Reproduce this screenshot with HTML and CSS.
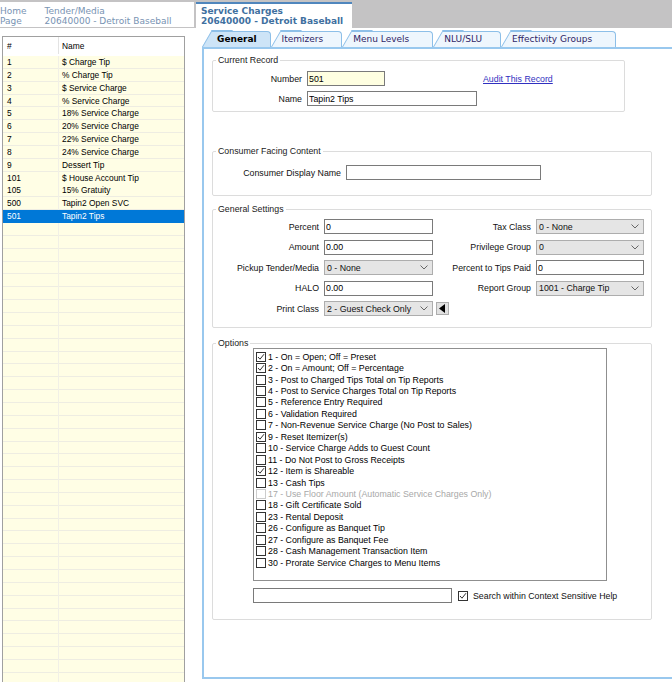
FILE: index.html
```html
<!DOCTYPE html>
<html lang="en">

  <head>
    <meta charset="UTF-8">
    <meta name="viewport" content="width=device-width, initial-scale=1.0">
    <title>Service Charges</title>

    <link rel="stylesheet" href="styles.css">

  </head>

  <body>

    <header class="crumbs">
      <div class="crumbs__trail">
        <span class="crumb">Home<br>Page</span>
        <span class="crumb">Tender/Media<br>20640000 - Detroit Baseball</span>
      </div>
      <div class="crumb crumb--active">Service Charges<br>20640000 - Detroit Baseball</div>
    </header>

    <div id="app__body">

      <div class="list">
        <div class="list__head">
          <span class="col__num">#</span>
          <span class="col__name">Name</span>
        </div>
        <div class="list__rows">
          <div class="row"><span class="col__num">1</span><span class="col__name">$ Charge Tip</span></div>
          <div class="row"><span class="col__num">2</span><span class="col__name">% Charge Tip</span></div>
          <div class="row"><span class="col__num">3</span><span class="col__name">$ Service Charge</span></div>
          <div class="row"><span class="col__num">4</span><span class="col__name">% Service Charge</span></div>
          <div class="row"><span class="col__num">5</span><span class="col__name">18% Service Charge</span></div>
          <div class="row"><span class="col__num">6</span><span class="col__name">20% Service Charge</span></div>
          <div class="row"><span class="col__num">7</span><span class="col__name">22% Service Charge</span></div>
          <div class="row"><span class="col__num">8</span><span class="col__name">24% Service Charge</span></div>
          <div class="row"><span class="col__num">9</span><span class="col__name">Dessert Tip</span></div>
          <div class="row"><span class="col__num">101</span><span class="col__name">$ House Account Tip</span></div>
          <div class="row"><span class="col__num">105</span><span class="col__name">15% Gratuity</span></div>
          <div class="row"><span class="col__num">500</span><span class="col__name">Tapin2 Open SVC</span></div>
          <div class="row row--selected"><span class="col__num">501</span><span class="col__name">Tapin2 Tips</span></div>
        </div>
      </div>

      <div class="editor">
        <nav class="tabs">
          <span class="tab tab--active">General</span>
          <span class="tab">Itemizers</span>
          <span class="tab tab--wide">Menu Levels</span>
          <span class="tab">NLU/SLU</span>
          <span class="tab tab--wide">Effectivity Groups</span>
        </nav>

        <div class="panel">

          <fieldset class="group group--narrow">
            <legend>Current Record</legend>
            <div class="field">
              <label class="field__label record__label">Number</label>
              <input class="input input--key record__number" type="text" value="501">
              <a href="#" class="audit">Audit This Record</a>
            </div>
            <div class="field field--next">
              <label class="field__label record__label">Name</label>
              <input class="input record__name" type="text" value="Tapin2 Tips">
            </div>
          </fieldset>

          <fieldset class="group group--consumer">
            <legend>Consumer Facing Content</legend>
            <div class="field consumer__field">
              <label class="field__label consumer__label">Consumer Display Name</label>
              <input class="input consumer__input" type="text" value="">
            </div>
          </fieldset>

          <fieldset class="group group--settings">
            <legend>General Settings</legend>
            <div class="settings">
              <label class="field__label">Percent</label>
              <input class="input" type="text" value="0">
              <label class="field__label">Tax Class</label>
              <div class="select"><span>0 - None</span><svg width="8" height="5" viewBox="0 0 8 5"><path d="M0.5 0.5 L4 4 L7.5 0.5" fill="none" stroke="#666" stroke-width="1"/></svg></div>

              <label class="field__label">Amount</label>
              <input class="input" type="text" value="0.00">
              <label class="field__label">Privilege Group</label>
              <div class="select"><span>0</span><svg width="8" height="5" viewBox="0 0 8 5"><path d="M0.5 0.5 L4 4 L7.5 0.5" fill="none" stroke="#666" stroke-width="1"/></svg></div>

              <label class="field__label">Pickup Tender/Media</label>
              <div class="select"><span>0 - None</span><svg width="8" height="5" viewBox="0 0 8 5"><path d="M0.5 0.5 L4 4 L7.5 0.5" fill="none" stroke="#666" stroke-width="1"/></svg></div>
              <label class="field__label">Percent to Tips Paid</label>
              <input class="input" type="text" value="0">

              <label class="field__label">HALO</label>
              <input class="input" type="text" value="0.00">
              <label class="field__label">Report Group</label>
              <div class="select"><span>1001 - Charge Tip</span><svg width="8" height="5" viewBox="0 0 8 5"><path d="M0.5 0.5 L4 4 L7.5 0.5" fill="none" stroke="#666" stroke-width="1"/></svg></div>

              <label class="field__label">Print Class</label>
              <div class="select"><span>2 - Guest Check Only</span><svg width="8" height="5" viewBox="0 0 8 5"><path d="M0.5 0.5 L4 4 L7.5 0.5" fill="none" stroke="#666" stroke-width="1"/></svg></div>
              <button class="arrow__btn" type="button"><svg width="7" height="9" viewBox="0 0 7 9"><polygon points="6,0 6,9 0,4.5" fill="#000"/></svg></button>
              <span></span>
            </div>
          </fieldset>

          <fieldset class="group group--options">
            <legend>Options</legend>
            <div class="options__list">
              <div class="option"><span class="check check--on"><svg width="8" height="8" viewBox="0 0 8 8"><path d="M1 4 L3 6.2 L7 1.2" fill="none" stroke="#333" stroke-width="1"/></svg></span>1 - On = Open; Off = Preset</div>
              <div class="option"><span class="check check--on"><svg width="8" height="8" viewBox="0 0 8 8"><path d="M1 4 L3 6.2 L7 1.2" fill="none" stroke="#333" stroke-width="1"/></svg></span>2 - On = Amount; Off = Percentage</div>
              <div class="option"><span class="check"></span>3 - Post to Charged Tips Total on Tip Reports</div>
              <div class="option"><span class="check"></span>4 - Post to Service Charges Total on Tip Reports</div>
              <div class="option"><span class="check"></span>5 - Reference Entry Required</div>
              <div class="option"><span class="check"></span>6 - Validation Required</div>
              <div class="option"><span class="check"></span>7 - Non-Revenue Service Charge (No Post to Sales)</div>
              <div class="option"><span class="check check--on"><svg width="8" height="8" viewBox="0 0 8 8"><path d="M1 4 L3 6.2 L7 1.2" fill="none" stroke="#333" stroke-width="1"/></svg></span>9 - Reset Itemizer(s)</div>
              <div class="option"><span class="check"></span>10 - Service Charge Adds to Guest Count</div>
              <div class="option"><span class="check"></span>11 - Do Not Post to Gross Receipts</div>
              <div class="option"><span class="check check--on"><svg width="8" height="8" viewBox="0 0 8 8"><path d="M1 4 L3 6.2 L7 1.2" fill="none" stroke="#333" stroke-width="1"/></svg></span>12 - Item is Shareable</div>
              <div class="option"><span class="check"></span>13 - Cash Tips</div>
              <div class="option option--disabled"><span class="check"></span>17 - Use Floor Amount (Automatic Service Charges Only)</div>
              <div class="option"><span class="check"></span>18 - Gift Certificate Sold</div>
              <div class="option"><span class="check"></span>23 - Rental Deposit</div>
              <div class="option"><span class="check"></span>26 - Configure as Banquet Tip</div>
              <div class="option"><span class="check"></span>27 - Configure as Banquet Fee</div>
              <div class="option"><span class="check"></span>28 - Cash Management Transaction Item</div>
              <div class="option"><span class="check"></span>30 - Prorate Service Charges to Menu Items</div>
            </div>
            <div class="help">
              <input class="input help__input" type="text" value="">
              <span class="check check--on"><svg width="8" height="8" viewBox="0 0 8 8"><path d="M1 4 L3 6.2 L7 1.2" fill="none" stroke="#333" stroke-width="1"/></svg></span>
              <span class="help__text">Search within Context Sensitive Help</span>
            </div>
          </fieldset>

        </div>
      </div>

    </div>

  </body>

</html>
```

FILE: styles.css
```css
* {
  margin: 0;
  padding: 0;
  box-sizing: border-box;
}

body {
  width: 672px;
  height: 682px;
  overflow: hidden;
  background-color: #ffffff;
  font-family: "Liberation Sans", Arial, sans-serif;
  color: #111;
}

/* breadcrumb strip */
.crumbs {
  display: flex;
  align-items: flex-start;
  height: 28px;
  padding-top: 2px;
  background-color: #c4c3c4;
  font: 9px/10px "DejaVu Sans", Verdana, sans-serif;
}

.crumbs__trail {
  display: flex;
  gap: 18px;
  width: 194px;
  height: 25px;
  padding-top: 4px;
  background-color: #ffffff;
}

.crumb {
  color: #7893b3;
  white-space: nowrap;
}

.crumb--active {
  width: 156px;
  height: 26px;
  margin-left: 2px;
  padding: 2px 0 0 5px;
  border-top: 2px solid #4f86bd;
  background-color: #ffffff;
  color: #40709f;
  font-weight: bold;
}

#app__body {
  display: flex;
  align-items: flex-start;
}

/* left list */
.list {
  width: 183px;
  height: 646px;
  margin: 8px 0 0 2px;
  border: 1px solid #a0a0a0;
  border-bottom: none;
  font-size: 8.4px;
  color: #000;
}

.list__head {
  display: flex;
  height: 19px;
  align-items: center;
  border-bottom: 1px solid #ffffff;
  padding-bottom: 1px;
}

.list__head .col__num {
  height: 100%;
  display: flex;
  align-items: center;
  border-right: 1px solid #e3e3e3;
}

.col__num {
  width: 56px;
  padding-left: 4px;
}

.col__name {
  padding-left: 3px;
}

.list__rows {
  height: 627px;
  background:
    linear-gradient(to right, transparent 55px, #f1f0e6 55px, #f1f0e6 56px, transparent 56px),
    repeating-linear-gradient(to bottom, #fffee5 0, #fffee5 11.85px, #eeede2 11.85px, #eeede2 12.85px);
}

.row {
  display: flex;
  height: 12.85px;
  line-height: 12.85px;
}

.row--selected {
  background-color: #0078d7;
  color: #ffffff;
}

/* editor with tabs */
.editor {
  flex: 1;
  margin: 3px 0 0 17px;
}

.tabs {
  display: flex;
  height: 16px;
}

.tab {
  position: relative;
  z-index: 0;
  padding: 0 19px 0 11px;
  font: 9px/16px "DejaVu Sans", Verdana, sans-serif;
  color: #2f2566;
  white-space: nowrap;
}

.tab::before {
  content: "";
  position: absolute;
  left: 0;
  bottom: 0;
  width: 20px;
  height: 100%;
  z-index: -1;
  background-color: #eef6fd;
  border-left: 1px solid #8dbfe8;
  border-top: 1px solid #8dbfe8;
  transform: skewX(-30deg);
  transform-origin: bottom left;
}

.tab::after {
  content: "";
  position: absolute;
  top: 0;
  bottom: 0;
  left: 10px;
  right: 0;
  z-index: -1;
  background-color: #eef6fd;
  border-top: 1px solid #8dbfe8;
  border-right: 1px solid #8dbfe8;
  border-radius: 0 4px 0 0;
}

.tab--wide {
  padding-right: 24px;
}

.tab--active {
  padding: 0 14px 0 15px;
  font-weight: bold;
  color: #000;
}

.tab--active::before,
.tab--active::after {
  background-color: #cde4f7;
}

.panel {
  height: 632px;
  padding: 6px 0 0 8px;
  border: 2px solid #99c8ee;
  border-right: none;
}

/* group boxes */
.group {
  width: 440px;
  border: 1px solid #dcdcdc;
  border-radius: 2px;
  min-width: 0;
}

.group legend {
  margin-left: 3px;
  padding: 0 2px;
  font-size: 8.8px;
  line-height: 10px;
  color: #1a1a1a;
}

.group--narrow {
  width: 413px;
  padding-bottom: 5px;
}

.group--consumer {
  margin-top: 34px;
  padding-bottom: 15px;
}

.group--settings {
  margin-top: 8px;
  padding-bottom: 11px;
}

.group--options {
  margin-top: 10px;
  padding-bottom: 16px;
}

.field {
  display: flex;
  align-items: center;
  gap: 5px;
  margin-top: 6px;
}

.field--next {
  margin-top: 5px;
}

.field__label {
  font-size: 8.8px;
  text-align: right;
  white-space: nowrap;
}

.record__label {
  width: 89px;
}

.input {
  height: 15px;
  padding: 0 1px;
  border: 1px solid #7a7a7a;
  background-color: #ffffff;
  font: 8.8px "Liberation Sans", Arial, sans-serif;
  color: #000;
  outline: none;
}

.input--key {
  background-color: #ffffe1;
}

.record__number {
  width: 78px;
}

.record__name {
  width: 170px;
}

.audit {
  margin-left: 93px;
  margin-top: 1px;
  font-size: 8.8px;
  color: #3030c0;
}

.consumer__field {
  margin-top: 9px;
}

.consumer__label {
  width: 128px;
}

.consumer__input {
  width: 195px;
}

.settings {
  display: grid;
  grid-template-columns: 106px 109px 93px 108px;
  grid-auto-rows: 15px;
  column-gap: 5px;
  row-gap: 5.5px;
  align-items: center;
  margin-top: 5px;
}

.select {
  display: flex;
  align-items: center;
  justify-content: space-between;
  height: 15px;
  padding: 0 4px 0 2px;
  border: 1px solid #adadad;
  background-color: #e5e5e5;
  font-size: 8.8px;
  white-space: nowrap;
}

.arrow__btn {
  display: flex;
  align-items: center;
  justify-content: center;
  width: 13px;
  height: 13px;
  margin-left: -2px;
  border: 1px solid #adadad;
  background-color: #e1e1e1;
}

/* options list */
.options__list {
  width: 354px;
  height: 233px;
  margin-left: 40px;
  padding: 2px 0 0 2px;
  border: 1px solid #8f8f8f;
  font-size: 8.8px;
  color: #000;
}

.option {
  display: flex;
  align-items: center;
  gap: 2px;
  height: 11.45px;
  white-space: nowrap;
}

.check {
  display: flex;
  align-items: center;
  justify-content: center;
  width: 10px;
  height: 10px;
  border: 1px solid #333;
  background-color: #ffffff;
  flex-shrink: 0;
}

.option--disabled {
  color: #a8a8a8;
}

.option--disabled .check {
  border-color: #cccccc;
}

.help {
  display: flex;
  align-items: center;
  margin: 7px 0 0 40px;
  font-size: 8.8px;
}

.help__input {
  width: 199px;
  margin-right: 6px;
}

.help__text {
  margin-left: 5px;
}
```
